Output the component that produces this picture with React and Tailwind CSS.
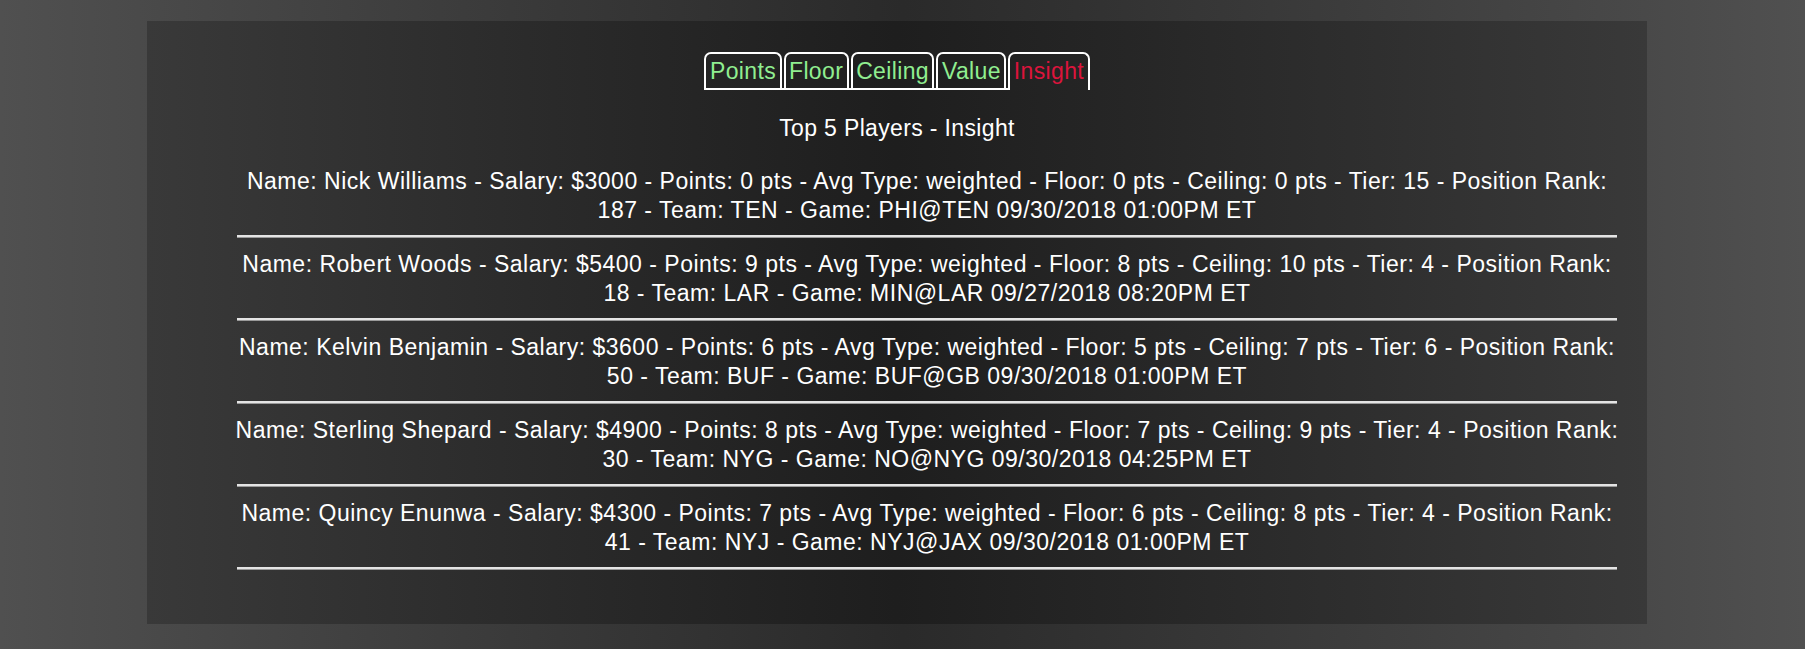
import { useState } from "react";

const players = [
  { name: "Nick Williams", salary: 3000, points: 0, floor: 0, ceiling: 0, tier: 15, rank: 187, team: "TEN", game: "PHI@TEN 09/30/2018 01:00PM ET" },
  { name: "Robert Woods", salary: 5400, points: 9, floor: 8, ceiling: 10, tier: 4, rank: 18, team: "LAR", game: "MIN@LAR 09/27/2018 08:20PM ET" },
  { name: "Kelvin Benjamin", salary: 3600, points: 6, floor: 5, ceiling: 7, tier: 6, rank: 50, team: "BUF", game: "BUF@GB 09/30/2018 01:00PM ET" },
  { name: "Sterling Shepard", salary: 4900, points: 8, floor: 7, ceiling: 9, tier: 4, rank: 30, team: "NYG", game: "NO@NYG 09/30/2018 04:25PM ET" },
  { name: "Quincy Enunwa", salary: 4300, points: 7, floor: 6, ceiling: 8, tier: 4, rank: 41, team: "NYJ", game: "NYJ@JAX 09/30/2018 01:00PM ET" },
];

const tabs = ["Points", "Floor", "Ceiling", "Value"];

const App = () => {
  const [active] = useState("Insight");

  return (
    <div className="min-h-screen bg-linear-to-r from-[#505050] via-[#2a2a2a] to-[#505050] pt-[21px] pb-[25px] font-['Liberation_Sans',Arial,sans-serif] tracking-[0.35px]">
      <div className="ml-[147px] w-[1500px] bg-linear-to-r from-[#393939] via-[#1e1e1e] to-[#393939] pt-[31px] pb-[42px] text-white text-[23px]">
        {/* tab strip */}
        <div className="flex justify-center items-end">
          <div className="flex gap-[2px] pr-[2px] border-b-2 border-white">
            {tabs.map((t) => (
              <button key={t} className="border-2 border-b-0 border-white rounded-t-[7px] px-[3.5px] pt-[4px] pb-[4px] leading-[1.15] text-[#90ee90]">
                {t}
              </button>
            ))}
          </div>
          <button className="border-2 border-b-0 border-white rounded-t-[7px] px-[3.5px] pt-[4px] pb-[6px] leading-[1.15] text-[#dc143c]">
            {active}
          </button>
        </div>

        <h2 className="mt-[24px] text-center leading-[1.25]">{`Top 5 Players - ${active}`}</h2>

        <div className="mt-[24px] pl-[90px] pr-[30px]">
          {players.map((p) => (
            <div key={p.name}>
              <p className="-mx-[8px] text-center leading-[1.25] tracking-[0.5px]">
                {`Name: ${p.name} - Salary: $${p.salary} - Points: ${p.points} pts - Avg Type: weighted - Floor: ${p.floor} pts - Ceiling: ${p.ceiling} pts - Tier: ${p.tier} - Position Rank:`}
                <br />
                {`${p.rank} - Team: ${p.team} - Game: ${p.game}`}
              </p>
              <hr className="mt-[10px] mb-[12.5px] border-0 border-t-2 border-t-[#e4e4e4] border-b border-b-[#9a9a9a]" />
            </div>
          ))}
        </div>
      </div>
    </div>
  );
};

export default App;
